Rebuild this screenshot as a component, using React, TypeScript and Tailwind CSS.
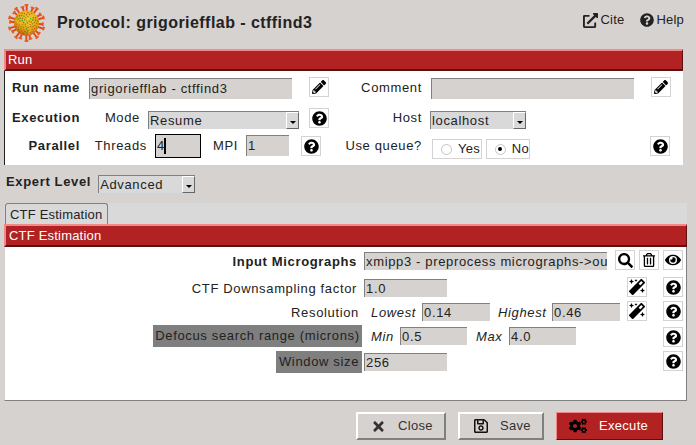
import type { ReactNode } from 'react';
import {
  FaCogs,
  FaExternalLinkAlt,
  FaEye,
  FaMagic,
  FaPencilAlt,
  FaQuestionCircle,
  FaRegSave,
  FaRegTrashAlt,
  FaSearch,
  FaTimes,
} from 'react-icons/fa';

const spikes = Array.from({ length: 20 }, (_, i) => (i * 360) / 20);
const dotColors = ['#2e9a2e', '#c9540f', '#a87a10', '#e2c22a', '#2e9a2e', '#1f8a3a', '#b0600f'];
// little pseudo-random speckle over the ball
const dots = Array.from({ length: 70 }, (_, i) => {
  const r = 14.5 * Math.sqrt((i + 0.5) / 70);
  const a = i * 2.39996;
  return { x: 26 + r * Math.cos(a), y: 24 + r * Math.sin(a), c: dotColors[i % 7] };
});

function Logo() {
  return (
    <svg viewBox="0 0 52 48" className="w-[41px] h-[40px] shrink-0 -mt-[3px]">
      <defs>
        <radialGradient id="ball" cx="0.55" cy="0.35" r="0.7">
          <stop offset="0" stopColor="#f2d22c" />
          <stop offset="0.6" stopColor="#e4a516" />
          <stop offset="1" stopColor="#c4500f" />
        </radialGradient>
      </defs>
      {spikes.map((a, i) => (
        <g key={a} transform={`rotate(${a + (i % 2) * 4} 26 24)`}>
          <rect x="25" y={i % 2 ? 3 : 1} width="2.4" height="9" fill="#e0481a" />
          <rect x="23.5" y={i % 2 ? 2 : 0} width="5" height="2.5" rx="1" fill="#ee5a20" />
        </g>
      ))}
      <circle cx="26" cy="24" r="16" fill="url(#ball)" />
      {dots.map((d, i) => (
        <circle key={i} cx={d.x} cy={d.y} r="0.9" fill={d.c} />
      ))}
    </svg>
  );
}

function IconBtn({ children, className = '' }: { children: ReactNode; className?: string }) {
  return (
    <div className={`w-5 h-5 shrink-0 flex items-center justify-center border border-[#d6d2d0] bg-white text-black ${className}`}>
      {children}
    </div>
  );
}

const Help = ({ className = '' }: { className?: string }) => (
  <IconBtn className={className}>
    <FaQuestionCircle size={15} />
  </IconBtn>
);

function Field({ value = '', className = '', focused = false }: { value?: string; className?: string; focused?: boolean }) {
  return (
    <div className={`relative shrink-0 ${className}`}>
      <input
        readOnly
        value={value}
        className={`block w-full h-full bg-[#d6d2d0] pl-[1px] pb-[1px] outline-none text-[13px] tracking-[0.65px] text-[#222] ${
          focused ? 'border border-black' : 'border-l border-t border-[#808080]'
        }`}
      />
      {focused && <span className="absolute left-[9px] top-[4px] w-[2px] h-[16px] bg-black" />}
    </div>
  );
}

function Select({ value, className = '' }: { value: string; className?: string }) {
  return (
    <div className={`shrink-0 h-[18px] flex items-center justify-between bg-[#d9d9d9] border-l border-t border-[#808080] pl-[1px] text-[13px] tracking-[0.65px] text-[#222] ${className}`}>
      {value}
      <div className="w-[13px] h-[17px] flex items-end justify-center pb-[4px] bg-[#d9d9d9] border border-t-white border-l-white border-r-[#666] border-b-[#666]">
        <div className="w-0 h-0 border-x-[3px] border-x-transparent border-t-[3px] border-t-black" />
      </div>
    </div>
  );
}

function SectionBar({ title, className = '' }: { title: string; className?: string }) {
  return (
    <div className={`bg-[#b22222] border-t-2 border-t-[#f08a8a] border-l-2 border-l-[#f08a8a] border-b-2 border-b-[#5e1010] border-r border-r-[#5e1010] flex items-center text-[13px] tracking-[0.2px] text-white ${className}`}>
      {title}
    </div>
  );
}

function Radio({ label, checked, className }: { label: string; checked?: boolean; className: string }) {
  return (
    <div className={`h-5 shrink-0 flex items-center border border-[#d6d2d0] text-[13px] tracking-[0.3px] text-[#222] ${className}`}>
      <div className="w-[11px] h-[11px] ml-[8px] mr-[6px] rounded-full border border-[#c4c4c4] flex items-center justify-center">
        {checked && <div className="w-[4px] h-[4px] rounded-full bg-black" />}
      </div>
      {label}
    </div>
  );
}

function ActionButton({ icon, label, className }: { icon: ReactNode; label: string; className: string }) {
  return (
    <div className={`h-[28px] flex items-center text-[13px] tracking-[0.3px] ${className}`}>
      {icon}
      {label}
    </div>
  );
}

const txt = 'text-[13px] tracking-[0.65px] text-[#222] whitespace-nowrap';

export default function App() {
  return (
    <div className="w-[696px] h-[445px] overflow-hidden bg-[#d6d2d0] font-['Liberation_Sans',sans-serif] text-[#222]">
      {/* cabecera */}
      <div className="h-[49px] flex items-center pl-[6px]">
        <Logo />
        <div className="ml-[10px] -mt-[3px] text-[16px] font-bold tracking-[0.45px] whitespace-nowrap">Protocol: grigorieff​lab - ctffind3</div>
        <div className="ml-auto mr-[12px] -mt-[9px] flex items-center text-[13px] tracking-[0.2px]">
          <FaExternalLinkAlt size={15} className="mr-[3px]" />
          Cite
          <FaQuestionCircle size={14} className="ml-[16px] mr-[2px]" />
          Help
        </div>
      </div>

      {/* Run */}
      <div className="ml-[4px] w-[679px]">
        <SectionBar title="Run" className="h-[22px] pl-[2px]" />
        <div className="h-[94px] bg-white border-l border-l-[#222] flex flex-col">
          <div className="flex items-start h-[22px] mt-[6px]">
            <div className={`${txt} font-bold w-[75px] text-right mt-[1px]`}>Run name</div>
            <Field value="grigorieff​lab - ctffind3" className="ml-[9px] mt-[1px] w-[203px] h-[21px]" />
            <IconBtn className="ml-[17px]"><FaPencilAlt size={14} /></IconBtn>
            <div className={`${txt} w-[93px] text-right mt-[1px]`}>Comment</div>
            <Field className="ml-[9px] mt-[1px] w-[203px] h-[21px]" />
            <IconBtn className="ml-[17px]"><FaPencilAlt size={14} /></IconBtn>
          </div>
          <div className="flex items-start h-[21px] mt-[9px]">
            <div className={`${txt} font-bold w-[75px] text-right`}>Execution</div>
            <div className={`${txt} w-[60px] text-right`}>Mode</div>
            <Select value="Resume" className="ml-[8px] mt-[3px] w-[151px]" />
            <Help className="ml-[10px]" />
            <div className={`${txt} w-[93px] text-right`}>Host</div>
            <Select value="localhost" className="ml-[8px] mt-[3px] w-[96px]" />
          </div>
          <div className="flex items-start h-[24px] mt-[5px]">
            <div className={`${txt} font-bold w-[75px] text-right mt-[2px]`}>Parallel</div>
            <div className={`${txt} w-[67px] text-right mt-[2px]`}>Threads</div>
            <Field value="4" focused className="ml-[8px] w-[46px] h-[24px]" />
            <div className={`${txt} ml-[12px] w-[23px] mt-[2px]`}>MPI</div>
            <Field value="1" className="ml-[10px] mt-[1px] w-[43px] h-[21px]" />
            <Help className="ml-[12px] mt-[2px]" />
            <div className={`${txt} w-[101px] text-right mt-[2px]`}>Use queue?</div>
            <Radio label="Yes" className="ml-[10px] mt-[5px] w-[50px]" />
            <Radio checked label="No" className="ml-[4px] mt-[5px] w-[44px]" />
            <Help className="ml-[120px] mt-[2px]" />
          </div>
        </div>
      </div>

      {/* Expert level */}
      <div className="flex items-start h-[18px] mt-[10px] pl-[6px]">
        <div className={`${txt} font-bold -mt-[3px]`}>Expert Level</div>
        <Select value="Advanced" className="ml-[7px] w-[97px]" />
      </div>

      {/* Pestañas */}
      <div className="mt-[10px] ml-[4px] w-[683px] bg-[#d9d9d9]">
        <div className="h-[21px] flex items-end">
          <div className="text-[13px] tracking-[0.2px] text-[#222] whitespace-nowrap ml-[1px] w-[103px] h-[21px] flex items-center pl-[4px] pt-[1px] bg-[#d9d9d9] border-t border-l border-r border-[#808080] rounded-t-[3px]">
            CTF Estimation
          </div>
        </div>
        <SectionBar title="CTF Estimation" className="h-[23px] pl-[3px]" />
        <div className="h-[154px] bg-white border-r border-b border-[#808080] border-l border-l-[#d6d2d0] flex flex-col">
          <div className="flex items-start h-[20px] mt-[3px]">
            <div className={`${txt} font-bold w-[352px] text-right mt-[2px]`}>Input Micrographs</div>
            <Field value="xmipp3 - preprocess micrographs->output" className="ml-[7px] mt-[2px] w-[243px] h-[18px]" />
            <IconBtn className="ml-[8px]"><FaSearch size={15} /></IconBtn>
            <IconBtn className="ml-[4px]"><FaRegTrashAlt size={14} /></IconBtn>
            <IconBtn className="ml-[4px]"><FaEye size={16} /></IconBtn>
          </div>
          <div className="flex items-start h-[20px] mt-[7px]">
            <div className={`${txt} w-[352px] text-right mt-[2px]`}>CTF Downsampling factor</div>
            <Field value="1.0" className="ml-[7px] mt-[2px] w-[83px] h-[18px]" />
            <IconBtn className="ml-[180px]"><FaMagic size={16} /></IconBtn>
            <Help className="ml-[16px]" />
          </div>
          <div className="flex items-start h-[20px] mt-[4px]">
            <div className={`${txt} w-[354px] text-right mt-[2px]`}>Resolution</div>
            <div className={`${txt} italic ml-[12px] w-[44px] mt-[2px]`}>Lowest</div>
            <Field value="0.14" className="ml-[7px] mt-[2px] w-[68px] h-[18px]" />
            <div className={`${txt} italic ml-[8px] w-[47px] mt-[2px]`}>Highest</div>
            <Field value="0.46" className="ml-[7px] mt-[2px] w-[68px] h-[18px]" />
            <IconBtn className="ml-[7px]"><FaMagic size={16} /></IconBtn>
            <Help className="ml-[16px]" />
          </div>
          <div className="flex items-start h-[22px] mt-[4px]">
            <div className={`${txt} ml-[148px] w-[209px] h-[22px] bg-[#7f7f7f] flex items-center justify-center`}>Defocus search range (microns)</div>
            <div className={`${txt} italic ml-[9px] w-[22px] mt-[2px]`}>Min</div>
            <Field value="0.5" className="ml-[7px] mt-[2px] w-[67px] h-[18px]" />
            <div className={`${txt} italic ml-[9px] w-[26px] mt-[2px]`}>Max</div>
            <Field value="4.0" className="ml-[7px] mt-[2px] w-[67px] h-[18px]" />
            <Help className="ml-[87px] mt-[2px]" />
          </div>
          <div className="flex items-start h-[22px] mt-[4px]">
            <div className={`${txt} ml-[271px] w-[86px] h-[22px] bg-[#7f7f7f] flex items-center justify-center`}>Window size</div>
            <Field value="256" className="ml-[2px] mt-[2px] w-[83px] h-[18px]" />
            <Help className="ml-[216px]" />
          </div>
        </div>
      </div>

      {/* Botones */}
      <div className="flex items-center mt-[11px] ml-[356px]">
        <ActionButton
          icon={<FaTimes size={15} className="ml-[13px] mr-[12px]" />}
          label="Close"
          className="w-[90px] text-[#333] bg-[#d6d2d0] border-2 border-t-white border-l-white border-r-[#808080] border-b-[#808080]"
        />
        <ActionButton
          icon={<FaRegSave size={16} className="ml-[13px] mr-[11px] text-[#111]" />}
          label="Save"
          className="ml-[12px] w-[86px] text-[#333] bg-[#d6d2d0] border-2 border-t-white border-l-white border-r-[#808080] border-b-[#808080]"
        />
        <ActionButton
          icon={<FaCogs size={18} className="ml-[12px] mr-[12px] text-black" />}
          label="Execute"
          className="ml-[12px] w-[107px] bg-[#b22222] text-white border border-t-[#f08a8a] border-l-[#f08a8a] border-r-[#5e1010] border-b-[#5e1010]"
        />
      </div>
    </div>
  );
}
